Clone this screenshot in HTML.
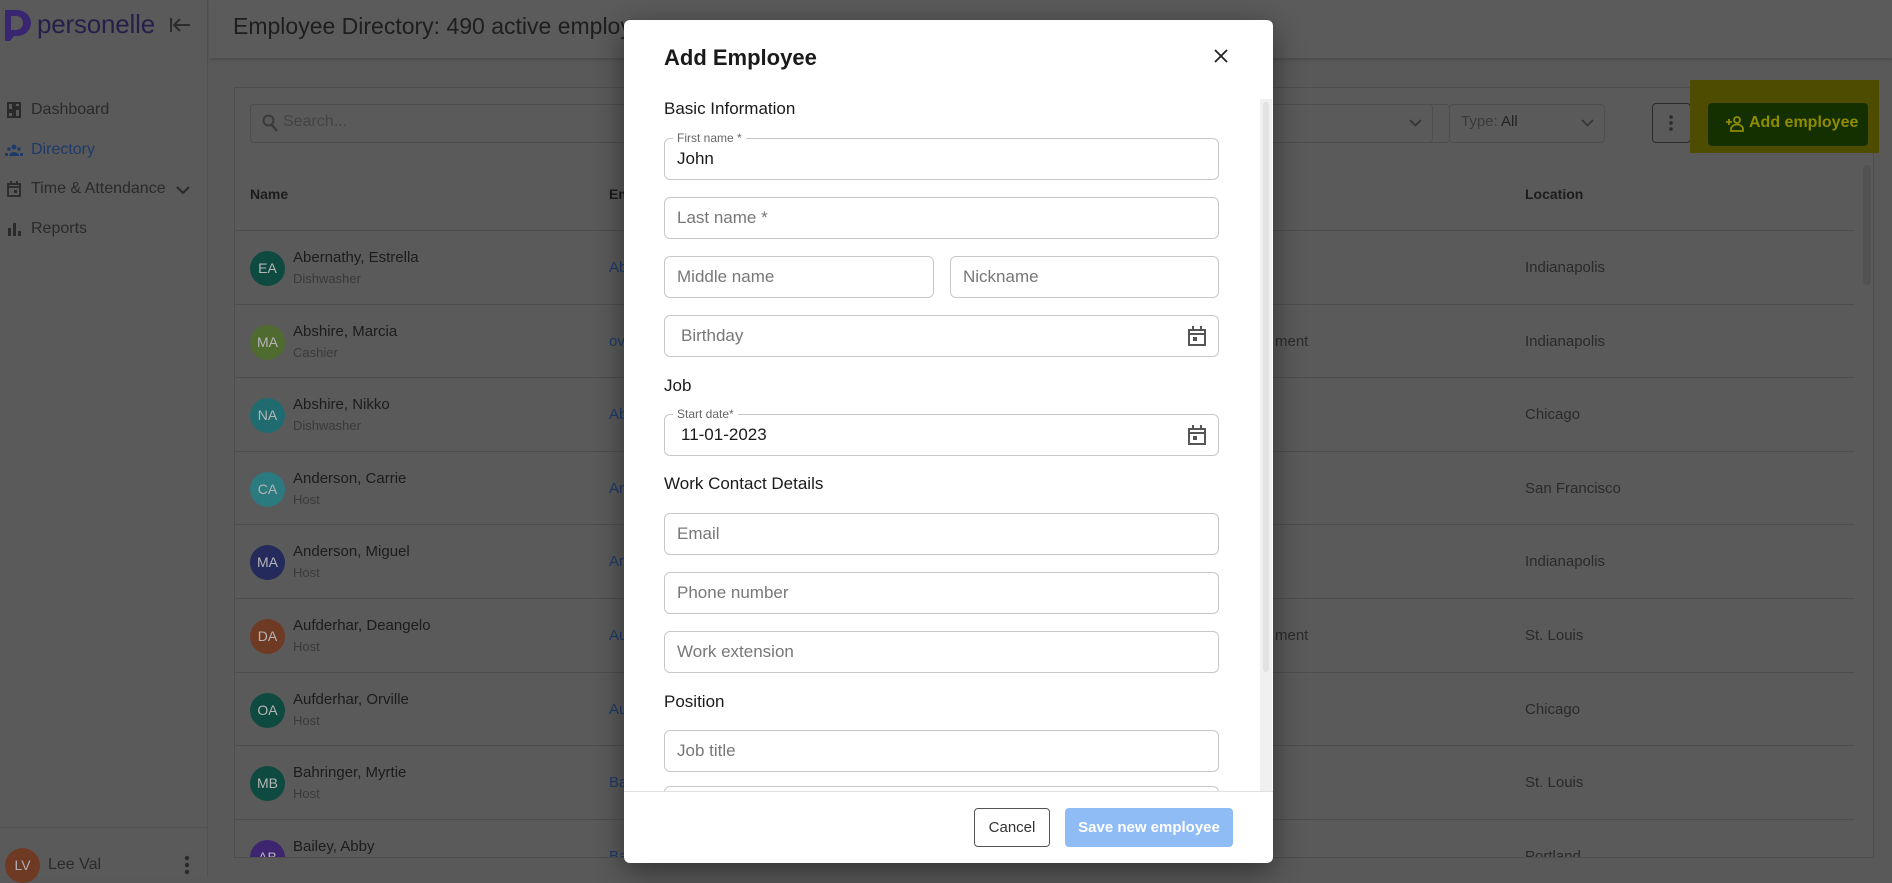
<!DOCTYPE html>
<html><head><meta charset="utf-8"><style>
*{box-sizing:border-box;margin:0;padding:0}
body{width:1892px;height:876px;overflow:hidden;position:relative;background:#595959;font-family:"Liberation Sans",sans-serif;color:#1c1c1c}
.a{position:absolute}
.nav{position:absolute;left:31px;font-size:16px;color:#2a2a2a}
.row{position:absolute;left:234px;width:1620px;height:74px;border-top:1px solid #4e4e4e}
.av{position:absolute;left:16px;top:20px;width:35px;height:35px;border-radius:50%;color:#b5b5b5;font-size:14px;text-align:center;line-height:35px}
.nm{position:absolute;left:59px;top:18px;font-size:15px;color:#1c1c1c}
.sb{position:absolute;left:59px;top:40px;font-size:13px;color:#3a3a3a}
.em{position:absolute;left:375px;top:28px;font-size:15px;color:#1e3a6a}
.loc{position:absolute;left:1291px;top:28px;font-size:15px;color:#2a2a2a}
.dep{position:absolute;left:1041px;top:28px;font-size:15px;color:#2a2a2a}
.inp{position:absolute;left:664px;width:555px;height:42px;border:1px solid #c8c8c8;border-radius:6px;background:#fff;font-size:17px;color:#777;padding-left:12px;line-height:40px}
.sec{position:absolute;left:664px;font-size:17px;color:#1a1a1a;font-weight:500}
.lbl{position:absolute;top:-8px;left:8px;background:#fff;padding:0 4px;font-size:12px;color:#666;line-height:14px}
.cal{position:absolute;right:12px;top:10px}
</style></head><body>
<!-- sidebar -->
<div class="a" style="left:0;top:0;width:208px;height:876px;background:#5a5a5a;border-right:1px solid #505050"></div>
<svg class="a" style="left:5px;top:10px" width="26" height="31" viewBox="0 0 26 31"><path d="M0 0h12a14 13 0 0 1 0 26H9l-4 5H0z" fill="#3a2670"/><path d="M6 6h5a7 7 0 0 1 0 14H6z" fill="#5a5a5a"/></svg>
<div class="a" style="left:37px;top:9px;font-size:26px;color:#25204a;letter-spacing:-0.2px">personelle</div>
<svg class="a" style="left:170px;top:17px" width="21" height="16" viewBox="0 0 21 16"><g fill="none" stroke="#2c2c2c" stroke-width="2"><path d="M1 1v14M4 8h16M10 2L4 8l6 6"/></g></svg>
<svg class="a" style="left:7px;top:102px" width="14" height="16" viewBox="0 0 14 16"><g fill="none" stroke="#2a2a2a" stroke-width="2"><rect x="1" y="1" width="5" height="7"/><rect x="8" y="1" width="5" height="4"/><rect x="1" y="10" width="5" height="5"/><rect x="8" y="7" width="5" height="8"/></g></svg>
<div class="nav" style="top:101px">Dashboard</div>
<svg class="a" style="left:5px;top:144px" width="18" height="12" viewBox="0 0 18 12"><g fill="#1e3a6a"><circle cx="9" cy="3" r="2.5"/><circle cx="4" cy="5" r="1.8"/><circle cx="14" cy="5" r="1.8"/><path d="M4 12a5 4 0 0 1 10 0z"/><rect x="0" y="9" width="3" height="3"/><rect x="15" y="9" width="3" height="3"/></g></svg>
<div class="nav" style="top:141px;color:#1e3a6a">Directory</div>
<svg class="a" style="left:7px;top:181px" width="14" height="16" viewBox="0 0 14 16"><g fill="none" stroke="#2a2a2a" stroke-width="1.8"><rect x="1" y="3" width="12" height="12"/><path d="M1 6h12M4 0v3M10 0v3"/></g><rect x="7" y="9" width="3" height="3" fill="#2a2a2a"/></svg>
<div class="nav" style="top:180px">Time &amp; Attendance</div>
<svg class="a" style="left:176px;top:186px" width="14" height="9" viewBox="0 0 14 9"><path d="M1 1l6 6 6-6" fill="none" stroke="#2a2a2a" stroke-width="2"/></svg>
<svg class="a" style="left:7px;top:222px" width="14" height="14" viewBox="0 0 14 14"><g fill="#2a2a2a"><rect x="1" y="6" width="3" height="8"/><rect x="6" y="1" width="3" height="13"/><rect x="11" y="9" width="3" height="5"/></g></svg>
<div class="nav" style="top:220px">Reports</div>
<div class="a" style="left:0;top:827px;width:208px;border-top:1px solid #505050"></div>
<div class="a" style="left:5px;top:848px;width:35px;height:35px;border-radius:50%;background:#6e3a24;color:#b0b0b0;font-size:14px;text-align:center;line-height:35px">LV</div>
<div class="a" style="left:48px;top:856px;font-size:16px;color:#2a2a2a">Lee Val</div>
<svg class="a" style="left:184px;top:854px" width="6" height="22" viewBox="0 0 6 22"><g fill="#2a2a2a"><circle cx="3" cy="4" r="2.2"/><circle cx="3" cy="11" r="2.2"/><circle cx="3" cy="18" r="2.2"/></g></svg>
<!-- header -->
<div class="a" style="left:209px;top:0;width:1683px;height:58px;background:#5b5b5b;box-shadow:0 2px 3px rgba(0,0,0,.15)"></div>
<div class="a" style="left:233px;top:13px;font-size:23px;color:#1e1e1e;white-space:nowrap">Employee Directory: 490 active employees</div>
<!-- card -->
<div class="a" style="left:234px;top:87px;width:1640px;height:771px;border:1px solid #4e4e4e;background:#5a5a5a"></div>
<div class="a" style="left:250px;top:104px;width:1200px;height:39px;border:1px solid #4e4e4e;border-radius:4px"></div>
<svg class="a" style="left:262px;top:114px" width="16" height="18" viewBox="0 0 16 18"><circle cx="6.5" cy="6.5" r="5" fill="none" stroke="#3a3a3a" stroke-width="2"/><path d="M10 11l5 6" stroke="#3a3a3a" stroke-width="2.4"/></svg>
<div class="a" style="left:283px;top:113px;font-size:16px;color:#444">Search...</div>
<div class="a" style="left:1200px;top:104px;width:233px;height:39px;border:1px solid #4e4e4e;border-radius:4px"></div>
<svg class="a" style="left:1409px;top:119px" width="13" height="8" viewBox="0 0 13 8"><path d="M1 1l5.5 5.5L12 1" fill="none" stroke="#333" stroke-width="1.6"/></svg>
<div class="a" style="left:1449px;top:104px;width:156px;height:39px;border:1px solid #4e4e4e;border-radius:4px"></div>
<div class="a" style="left:1461px;top:113px;font-size:15px;color:#3a3a3a">Type: <span style="color:#222">All</span></div>
<svg class="a" style="left:1581px;top:119px" width="13" height="8" viewBox="0 0 13 8"><path d="M1 1l5.5 5.5L12 1" fill="none" stroke="#333" stroke-width="1.6"/></svg>
<div class="a" style="left:1652px;top:103px;width:39px;height:40px;border:1px solid #2a2a2a;border-radius:4px"></div>
<svg class="a" style="left:1668px;top:114px" width="6" height="18" viewBox="0 0 6 18"><g fill="#2a2a2a"><circle cx="3" cy="3" r="1.8"/><circle cx="3" cy="9" r="1.8"/><circle cx="3" cy="15" r="1.8"/></g></svg>
<div class="a" style="left:1690px;top:80px;width:189px;height:73px;background:#4e4c00"></div>
<div class="a" style="left:1708px;top:103px;width:160px;height:43px;background:#143000;border-radius:4px"></div>
<svg class="a" style="left:1726px;top:116px" width="18" height="16" viewBox="0 0 18 16"><g fill="none" stroke="#8f8c00" stroke-width="1.8"><circle cx="11" cy="4" r="3"/><path d="M5 15v-2a4 3 0 0 1 12 0v2z"/><path d="M0 6h6M3 3v6"/></g></svg>
<div class="a" style="left:1749px;top:114px;font-size:16px;color:#8f8c00;font-weight:bold">Add employee</div>
<div class="a" style="left:250px;top:186px;font-size:14px;color:#1c1c1c;font-weight:bold">Name</div>
<div class="a" style="left:609px;top:186px;font-size:14px;color:#1c1c1c;font-weight:bold">Em</div>
<div class="a" style="left:1525px;top:186px;font-size:14px;color:#1c1c1c;font-weight:bold">Location</div>
<div class="a" style="left:1863px;top:165px;width:8px;height:120px;background:#525252;border-radius:4px"></div>
<div style="position:absolute;left:0;top:0;width:1892px;height:857px;overflow:hidden">
<div class="row" style="top:230px"><div class="av" style="background:#0f4a40">EA</div><div class="nm">Abernathy, Estrella</div><div class="sb">Dishwasher</div><div class="em">Ab</div><div class="loc">Indianapolis</div></div>
<div class="row" style="top:303.6px"><div class="av" style="background:#4f6b30">MA</div><div class="nm">Abshire, Marcia</div><div class="sb">Cashier</div><div class="em">ov</div><div class="dep">ment</div><div class="loc">Indianapolis</div></div>
<div class="row" style="top:377.2px"><div class="av" style="background:#1f6b70">NA</div><div class="nm">Abshire, Nikko</div><div class="sb">Dishwasher</div><div class="em">Ab</div><div class="loc">Chicago</div></div>
<div class="row" style="top:450.8px"><div class="av" style="background:#2a7a80">CA</div><div class="nm">Anderson, Carrie</div><div class="sb">Host</div><div class="em">An</div><div class="loc">San Francisco</div></div>
<div class="row" style="top:524.4px"><div class="av" style="background:#252a5c">MA</div><div class="nm">Anderson, Miguel</div><div class="sb">Host</div><div class="em">An</div><div class="loc">Indianapolis</div></div>
<div class="row" style="top:598px"><div class="av" style="background:#6e3a24">DA</div><div class="nm">Aufderhar, Deangelo</div><div class="sb">Host</div><div class="em">Au</div><div class="dep">ment</div><div class="loc">St. Louis</div></div>
<div class="row" style="top:671.6px"><div class="av" style="background:#0f4a40">OA</div><div class="nm">Aufderhar, Orville</div><div class="sb">Host</div><div class="em">Au</div><div class="loc">Chicago</div></div>
<div class="row" style="top:745.2px"><div class="av" style="background:#0f4a40">MB</div><div class="nm">Bahringer, Myrtie</div><div class="sb">Host</div><div class="em">Ba</div><div class="loc">St. Louis</div></div>
<div class="row" style="top:818.8px"><div class="av" style="background:#3d2570">AB</div><div class="nm">Bailey, Abby</div><div class="sb">Host</div><div class="em">Ba</div><div class="loc">Portland</div></div>
</div>
<!-- modal -->
<div class="a" style="left:624px;top:20px;width:649px;height:843px;background:#fff;border-radius:6px;box-shadow:0 8px 30px rgba(0,0,0,.45)"></div>
<div class="a" style="left:664px;top:45px;font-size:22px;color:#1a1a1a;font-weight:bold">Add Employee</div>
<svg class="a" style="left:1214px;top:49px" width="14" height="14" viewBox="0 0 14 14"><path d="M1 1l12 12M13 1L1 13" stroke="#222" stroke-width="1.8"/></svg>
<div class="a" style="left:1260px;top:99px;width:12px;height:692px;background:#f0f0f0"></div>
<div class="a" style="left:1263px;top:102px;width:6px;height:570px;background:#e2e2e2;border-radius:3px"></div>
<div class="sec" style="top:99px">Basic Information</div>
<div class="inp" style="top:138px;color:#1a1a1a"><span class="lbl">First name *</span>John</div>
<div class="inp" style="top:197px">Last name *</div>
<div class="inp" style="top:256px;width:270px">Middle name</div>
<div class="inp" style="top:256px;left:950px;width:269px">Nickname</div>
<div class="inp" style="top:315px;padding-left:16px">Birthday<svg class="cal" width="18" height="20" viewBox="0 0 18 20"><g fill="none" stroke="#555" stroke-width="2"><rect x="1" y="4" width="16" height="15"/><path d="M1 8h16M5 0v4M13 0v4"/></g><rect x="5" y="11" width="4" height="4" fill="#555"/></svg></div>
<div class="sec" style="top:376px">Job</div>
<div class="inp" style="top:414px;color:#1a1a1a;padding-left:16px"><span class="lbl">Start date*</span>11-01-2023<svg class="cal" width="18" height="20" viewBox="0 0 18 20"><g fill="none" stroke="#555" stroke-width="2"><rect x="1" y="4" width="16" height="15"/><path d="M1 8h16M5 0v4M13 0v4"/></g><rect x="5" y="11" width="4" height="4" fill="#555"/></svg></div>
<div class="sec" style="top:474px">Work Contact Details</div>
<div class="inp" style="top:513px">Email</div>
<div class="inp" style="top:572px">Phone number</div>
<div class="inp" style="top:631px">Work extension</div>
<div class="sec" style="top:692px">Position</div>
<div class="inp" style="top:730px">Job title</div>
<div style="position:absolute;left:664px;top:786px;width:555px;height:5px;overflow:hidden"><div style="height:20px;border:1px solid #c8c8c8;border-radius:6px"></div></div>
<div class="a" style="left:624px;top:791px;width:649px;border-top:1px solid #e0e0e0"></div>
<div class="a" style="left:974px;top:808px;width:76px;height:39px;border:1px solid #555;border-radius:4px;font-size:15px;color:#333;text-align:center;line-height:37px">Cancel</div>
<div class="a" style="left:1065px;top:808px;width:168px;height:39px;background:#8fbcf5;border-radius:4px;font-size:15px;color:#fff;text-align:center;line-height:39px;font-weight:bold">Save new employee</div>
</body></html>
